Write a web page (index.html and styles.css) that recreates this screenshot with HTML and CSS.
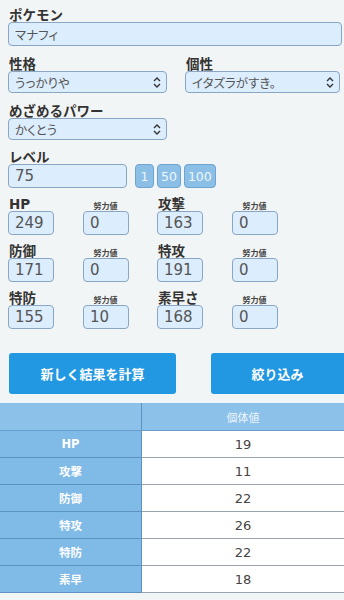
FILE: index.html
```html
<!DOCTYPE html>
<html lang="ja">
<head>
<meta charset="utf-8">
<title>個体値計算</title>
<link rel="stylesheet" href="styles.css">
</head>
<body>
<div class="page">
  <form class="form">
    <div class="field">
      <label class="lbl">ポケモン</label>
      <input class="box name" type="text" value="マナフィ">
    </div>

    <div class="pair">
      <div class="field col-a">
        <label class="lbl">性格</label>
        <div class="sel-wrap w159">
          <select class="box sel"><option>うっかりや</option></select>
          <svg class="arrow" width="8" height="11" viewBox="0 0 8 11"><path d="M1 4 L4 1 L7 4 M1 7 L4 10 L7 7" fill="none" stroke="#333" stroke-width="1.4"/></svg>
        </div>
      </div>
      <div class="field col-b">
        <label class="lbl">個性</label>
        <div class="sel-wrap w154">
          <select class="box sel"><option>イタズラがすき。</option></select>
          <svg class="arrow" width="8" height="11" viewBox="0 0 8 11"><path d="M1 4 L4 1 L7 4 M1 7 L4 10 L7 7" fill="none" stroke="#333" stroke-width="1.4"/></svg>
        </div>
      </div>
    </div>

    <div class="field">
      <label class="lbl">めざめるパワー</label>
      <div class="sel-wrap w159">
        <select class="box sel"><option>かくとう</option></select>
        <svg class="arrow" width="8" height="11" viewBox="0 0 8 11"><path d="M1 4 L4 1 L7 4 M1 7 L4 10 L7 7" fill="none" stroke="#333" stroke-width="1.4"/></svg>
      </div>
    </div>

    <div class="field level">
      <label class="lbl">レベル</label>
      <div class="level-row">
        <input class="box lv" type="text" value="75">
        <div class="lv-btns">
          <button type="button" class="lvb">1</button>
          <button type="button" class="lvb">50</button>
          <button type="button" class="lvb">100</button>
        </div>
      </div>
    </div>

    <div class="stats">
      <div class="stat"><label class="lbl">HP</label><input class="box num" type="text" value="249"></div>
      <div class="stat ev"><label class="evl">努力値</label><input class="box num" type="text" value="0"></div>
      <div class="stat"><label class="lbl">攻撃</label><input class="box num" type="text" value="163"></div>
      <div class="stat ev"><label class="evl">努力値</label><input class="box num" type="text" value="0"></div>

      <div class="stat"><label class="lbl">防御</label><input class="box num" type="text" value="171"></div>
      <div class="stat ev"><label class="evl">努力値</label><input class="box num" type="text" value="0"></div>
      <div class="stat"><label class="lbl">特攻</label><input class="box num" type="text" value="191"></div>
      <div class="stat ev"><label class="evl">努力値</label><input class="box num" type="text" value="0"></div>

      <div class="stat"><label class="lbl">特防</label><input class="box num" type="text" value="155"></div>
      <div class="stat ev"><label class="evl">努力値</label><input class="box num" type="text" value="10"></div>
      <div class="stat"><label class="lbl">素早さ</label><input class="box num" type="text" value="168"></div>
      <div class="stat ev"><label class="evl">努力値</label><input class="box num" type="text" value="0"></div>
    </div>
  </form>

  <div class="actions">
    <button type="button" class="btn btn-calc">新しく結果を計算</button>
    <button type="button" class="btn btn-filter">絞り込み</button>
  </div>

  <table class="result">
    <thead>
      <tr><th class="hl"></th><th class="hr">個体値</th></tr>
    </thead>
    <tbody>
      <tr><th>HP</th><td>19</td></tr>
      <tr><th>攻撃</th><td>11</td></tr>
      <tr><th>防御</th><td>22</td></tr>
      <tr><th>特攻</th><td>26</td></tr>
      <tr><th>特防</th><td>22</td></tr>
      <tr><th>素早</th><td>18</td></tr>
    </tbody>
  </table>
</div>
</body>
</html>
```

FILE: styles.css
```css
html, body {
  margin: 0;
  padding: 0;
  overflow-x: hidden;
}
body {
  background: #f2f5f5;
  font-family: "DejaVu Sans", "Noto Sans CJK JP", sans-serif;
  color: #333;
}
.page {
  width: 344px;
  overflow: hidden;
}
.form {
  padding: 8px 0 0 8px;
  margin: 0;
}
.field {
  display: flex;
  flex-direction: column;
  margin-bottom: 11px;
}
.lbl {
  display: block;
  height: 14px;
  line-height: 14px;
  padding-left: 1px;
  font-size: 13.5px;
  font-weight: bold;
  color: #333;
  font-family: "DejaVu Sans", "Noto Sans CJK JP", sans-serif;
  white-space: nowrap;
}
.box {
  box-sizing: border-box;
  margin: 0;
  background: #dcedfd;
  border: 1px solid #8aa6c4;
  border-radius: 4px;
  font-family: "DejaVu Sans", "Noto Sans CJK JP", sans-serif;
  font-size: 13px;
  color: #555;
  padding: 0 0 0 6px;
  outline: none;
}
.name {
  width: 334px;
  height: 24px;
  font-family: "Noto Sans CJK JP", sans-serif;
  font-size: 12.5px;
  font-feature-settings: "palt";
}
.pair {
  display: flex;
}
.col-a {
  width: 177px;
}
.col-b {
  width: 155px;
}
.sel-wrap {
  position: relative;
  height: 22px;
}
.w159 { width: 159px; }
.w154 { width: 155px; }
.sel {
  -webkit-appearance: none;
  appearance: none;
  width: 100%;
  height: 22px;
  font-family: "Noto Sans CJK JP", "DejaVu Sans", sans-serif;
  font-size: 12.5px;
  font-feature-settings: "palt";
  color: #555;
  padding-left: 6px;
}
.arrow {
  position: absolute;
  right: 6px;
  top: 6px;
}
.level {
  margin-bottom: 9px;
  margin-top: -1px;
}
.level-row {
  display: flex;
  align-items: center;
}
.lv {
  width: 119px;
  height: 24px;
  font-size: 15px;
}
.lv-btns {
  display: flex;
  gap: 3px;
  margin-left: 8px;
}
.lvb {
  box-sizing: border-box;
  height: 24px;
  padding: 0 3px;
  min-width: 19px;
  background: #8cbfe6;
  border: 1px solid #6fa3d0;
  border-radius: 4px;
  color: #eef6fd;
  font-family: "DejaVu Sans", sans-serif;
  font-size: 12.5px;
  margin: 0;
}
.stats {
  display: grid;
  grid-template-columns: 75px 74px 75px 75px;
  row-gap: 9px;
}
.stat {
  display: flex;
  flex-direction: column;
}
.evl {
  display: block;
  height: 14px;
  line-height: 17px;
  font-size: 8px;
  color: #444;
  width: 45px;
  text-align: center;
  font-family: "Noto Sans CJK JP", sans-serif;
  font-weight: bold;
}
.num {
  width: 46px;
  height: 24px;
  font-size: 15px;
}
.actions {
  display: flex;
  gap: 35px;
  padding: 24px 0 0 9px;
}
.btn {
  height: 41px;
  background: #2297e2;
  border: none;
  border-radius: 3px;
  color: #fff;
  font-family: "Noto Sans CJK JP", sans-serif;
  font-weight: bold;
  font-size: 13px;
  margin: 0;
  padding: 0;
}
.btn-calc {
  flex: 0 0 167px;
}
.btn-filter {
  flex: 0 0 133px;
  border-radius: 3px 0 0 3px;
}
.result {
  margin-top: 9px;
  width: 344px;
  border-collapse: collapse;
  font-family: "DejaVu Sans", "Noto Sans CJK JP", sans-serif;
}
.result th, .result td {
  padding: 0;
  text-align: center;
  height: 26px;
}
.result thead th {
  height: 27px;
  background: #8cc1e9;
  color: #eef5fb;
  font-size: 11px;
  font-weight: normal;
  font-family: "Noto Sans CJK JP", sans-serif;
  border-bottom: 1px solid #6a9fcc;
}
.result .hl {
  width: 141px;
  border-right: 1px solid #5d91c0;
}
.result tbody th {
  background: #80bae6;
  color: #fff;
  font-size: 11.5px;
  font-weight: bold;
  font-family: "DejaVu Sans", "Noto Sans CJK JP", sans-serif;
  border-bottom: 1px solid #5d91c0;
  border-right: 1px solid #5d91c0;
}
.result tbody td {
  background: #fff;
  color: #444;
  font-size: 13px;
  border-bottom: 1px solid #9aa3ab;
}
```
